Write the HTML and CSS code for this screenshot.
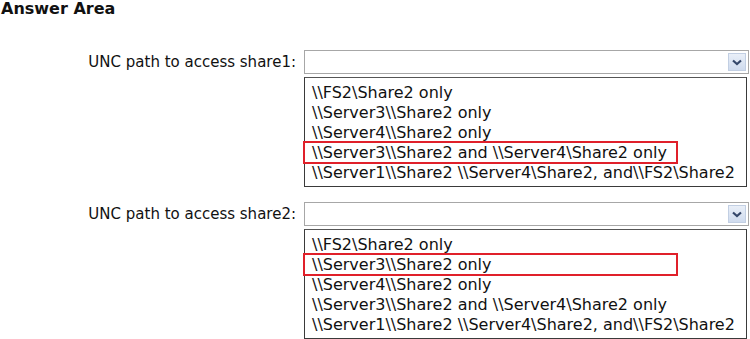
FILE: index.html
```html
<!DOCTYPE html>
<html lang="en">
<head>
    <meta charset="UTF-8">
    <title>Answer Area</title>
    <link rel="stylesheet" href="styles.css">
</head>
<body>
    <h1 class="title">Answer Area</h1>

    <div class="question">
        <div class="label">UNC path to access share1:</div>
        <div class="dropdown">
            <div class="select">
                <span class="arrow">
                    <svg width="10" height="7" viewBox="0 0 10 7"><path d="M1 1.5 L5 5 L9 1.5" fill="none" stroke="#34476a" stroke-width="2.2"/></svg>
                </span>
            </div>
            <ul class="options">
                <li>\\FS2\Share2 only</li>
                <li>\\Server3\\Share2 only</li>
                <li>\\Server4\\Share2 only</li>
                <li class="picked">\\Server3\\Share2 and \\Server4\Share2 only</li>
                <li>\\Server1\\Share2 \\Server4\Share2, and\\FS2\Share2</li>
            </ul>
        </div>
    </div>

    <div class="question">
        <div class="label">UNC path to access share2:</div>
        <div class="dropdown">
            <div class="select">
                <span class="arrow">
                    <svg width="10" height="7" viewBox="0 0 10 7"><path d="M1 1.5 L5 5 L9 1.5" fill="none" stroke="#34476a" stroke-width="2.2"/></svg>
                </span>
            </div>
            <ul class="options">
                <li>\\FS2\Share2 only</li>
                <li class="picked">\\Server3\\Share2 only</li>
                <li>\\Server4\\Share2 only</li>
                <li>\\Server3\\Share2 and \\Server4\Share2 only</li>
                <li>\\Server1\\Share2 \\Server4\Share2, and\\FS2\Share2</li>
            </ul>
        </div>
    </div>
</body>
</html>
```

FILE: styles.css
```css
body {
    margin: 0;
    background-color: #fff;
    color: #111;
    font-family: "DejaVu Sans", Verdana, sans-serif;
    font-size: 15px;
}
.title {
    margin: 0 0 0 1px;
    font-size: 16px;
    font-weight: bold;
    line-height: 18px;
}
.question {
    display: flex;
    align-items: flex-start;
    margin-top: 32px;
}
.question + .question {
    margin-top: 15px;
}
.label {
    width: 296px;
    text-align: right;
    line-height: 24px;
}
.dropdown {
    margin-left: 8px;
    width: 445px;
}
.select {
    height: 24px;
    box-sizing: border-box;
    border: 1px solid #a7a7a7;
    background-color: #fff;
    display: flex;
    justify-content: flex-end;
    align-items: center;
    padding-right: 2px;
}
.arrow {
    width: 18px;
    height: 18px;
    box-sizing: border-box;
    border: 1px solid #c2cfe3;
    background: linear-gradient(#e9eff8, #cfdbee);
    display: flex;
    justify-content: center;
    align-items: center;
}
.options {
    list-style: none;
    margin: 3px 0 0 0;
    padding: 5px 0 3px 7px;
    width: 443px;
    box-sizing: border-box;
    border: 1px solid #3a3a3a;
    border-top-color: #555;
    font-size: 16px;
}
.options li {
    line-height: 20px;
    white-space: nowrap;
    position: relative;
}
.options li.picked::after {
    content: "";
    position: absolute;
    left: -9px;
    top: -2px;
    width: 375px;
    height: 23px;
    box-sizing: border-box;
    border: 2px solid #e0202a;
}
```
